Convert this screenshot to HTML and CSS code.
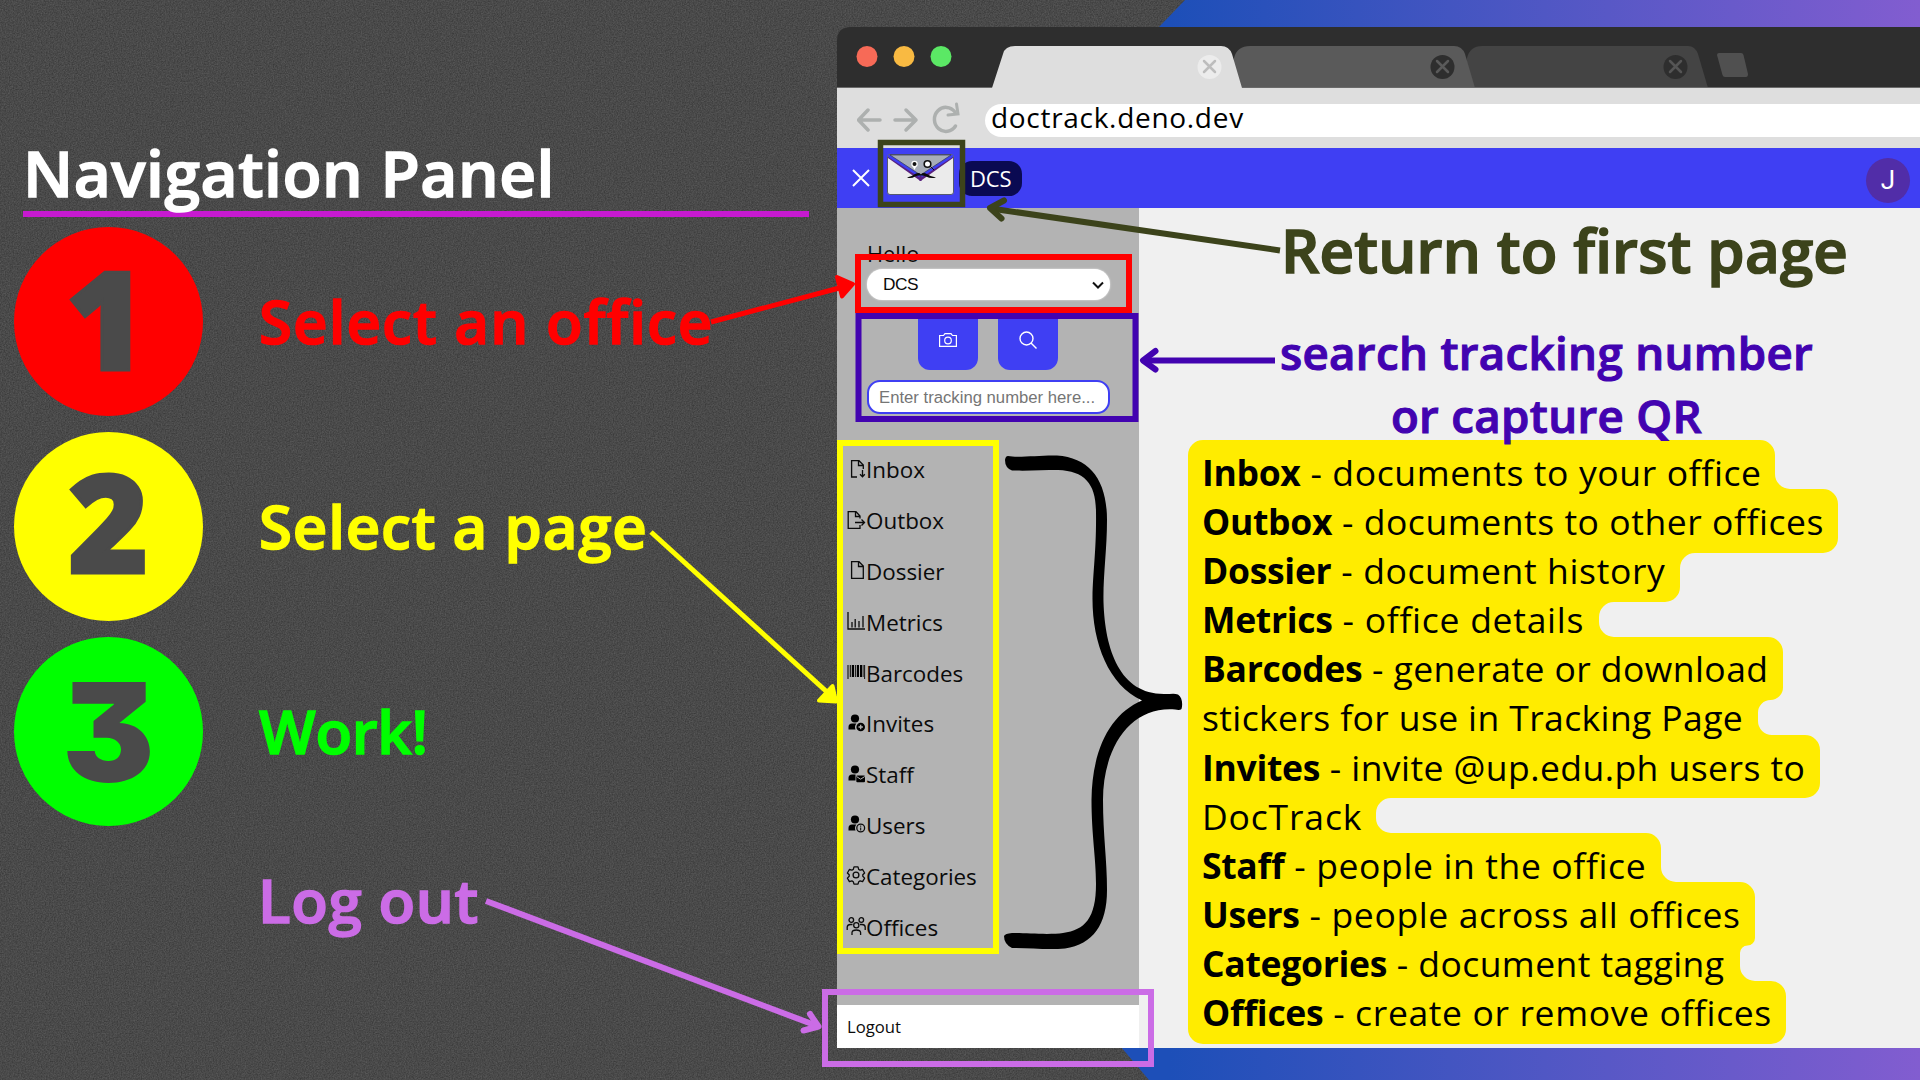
FILE: index.html
```html
<!DOCTYPE html>
<html lang="en">
<head>
<meta charset="utf-8">
<title>DocTrack – Navigation Panel</title>
<link rel="stylesheet" href="styles.css">
</head>
<body>
<div class="stage">
  <svg class="backdrop" viewBox="0 0 1920 1080" aria-hidden="true">
    <defs>
      <filter id="grain" x="0" y="0" width="100%" height="100%" color-interpolation-filters="sRGB">
        <feTurbulence type="fractalNoise" baseFrequency="0.75" numOctaves="2" seed="4"/>
        <feColorMatrix values="0.24 0 0 0 0.17  0.24 0 0 0 0.17  0.24 0 0 0 0.17  0 0 0 0 1"/>
      </filter>
      <linearGradient id="sky" gradientUnits="userSpaceOnUse" x1="1170" y1="0" x2="1920" y2="0">
        <stop offset="0" stop-color="#1d4fb8"/><stop offset=".5" stop-color="#5057c4"/><stop offset="1" stop-color="#825dd0"/>
      </linearGradient>
    </defs>
    <rect width="1920" height="1080" fill="#4a4a4a"/>
    <rect width="1920" height="1080" filter="url(#grain)" opacity=".7"/>
    <path d="M1185 0H1920V1080H1149L1121 1047L1000 540L1159 27z" fill="url(#sky)"/>
  </svg>

  <section class="guide">
    <h1>Navigation Panel</h1>
    <ol class="steps">
      <li class="step red"><span class="disc one"><i>1</i></span><span class="label">Select an office</span></li>
      <li class="step yellow"><span class="disc two"><i>2</i></span><span class="label">Select a page</span></li>
      <li class="step green"><span class="disc three"><i>3</i></span><span class="label">Work!</span></li>
    </ol>
    <p class="leave">Log out</p>
  </section>

  <section class="browser">
    <svg class="tabstrip" width="1083" height="61" viewBox="0 0 1083 61">
      <path d="M0 61V14Q0 0 14 0H1083V61z" fill="#2e2e2e"/>
      <circle cx="30" cy="29.500" r="10.500" fill="#f76a57"/><circle cx="67" cy="29.500" r="10.500" fill="#f9ba42"/><circle cx="104" cy="29.500" r="10.500" fill="#5be865"/>
      <path d="M626 61L630 31Q633 19 645 19H851Q858 19 861 27L871 61z" fill="#444"/>
      <path d="M390 61L397 31Q400 19 413 19H617Q625 19 628 27L638 61z" fill="#5a5a5a"/>
      <path d="M0 60.500H1083" stroke="#6a6a6a"/>
      <path d="M155 61L166 27Q168 19 178 19H384Q392 19 395 27L405 61z" fill="#dedede"/>
      <circle cx="372.500" cy="40" r="12" fill="#ececec"/><circle cx="605.500" cy="40" r="12" fill="#2e2e2e"/><circle cx="838.500" cy="40" r="12" fill="#2e2e2e"/>
      <g stroke-width="2.500" stroke-linecap="round"><path d="M367 34l11 11m0-11l-11 11" stroke="#bdbdbd"/><path d="M600 34l11 11m0-11l-11 11" stroke="#5a5a5a"/><path d="M833 34l11 11m0-11l-11 11" stroke="#555"/></g>
      <path d="M882 26H904Q906 26 906.500 28L911 47Q911 50 909 50H888Q886 50 885.500 48L880 28Q880 26 882 26z" fill="#505050"/>
    </svg>
    <div class="toolbar">
      <svg class="navicons" width="106" height="34" viewBox="0 0 106 34" fill="none" stroke="#adb0af" stroke-width="3.500" stroke-linecap="round" stroke-linejoin="round">
        <path d="M23 19H1.500M11 9L1.500 19L11 29"/><path d="M38 19H59M49 9L59 19L49 29"/><path d="M98.500 25A11.500 12 0 1 1 98 11"/><path d="M99.500 3l1.500 10-10 1" stroke-linejoin="miter" stroke-width="3"/>
      </svg>
      <div class="address">doctrack.deno.dev</div>
    </div>
    <header class="appbar">
      <svg width="18" height="18" viewBox="0 0 18 18" stroke="#fff" stroke-width="2"><path d="M1 1l16 16M17 1L1 17"/></svg>
      <svg class="logo" width="67" height="41" viewBox="0 0 67 41">
        <rect x=".5" y=".5" width="66" height="40" rx="2.500" fill="#ebebeb" stroke="#555a70"/>
        <path d="M1 4L33.500 27L66 4V1H1z" fill="#58207f"/><path d="M1 3L33.500 24L66 3V1H1z" fill="#3f3ff3"/>
        <path d="M3 1H64L33.500 21z" fill="#a7adb8" stroke="#323656" stroke-width=".7"/>
        <path d="M33.500 22v5" stroke="#58207f" stroke-width="2"/>
        <circle cx="27.500" cy="10" r="3.200" fill="#fff"/><circle cx="27.500" cy="10" r="2" fill="#111"/><path d="M26 13l1.500 3 1.500-3z" fill="#fff"/>
        <circle cx="40.500" cy="10" r="3.300" fill="#fff" stroke="#111" stroke-width="1.600"/><path d="M43 12l4 4" stroke="#111"/>
        <path d="M20 23.500Q24 23 28 20Q32 18 34 20.500Q36 18 40 20Q44 23 49 23.500Q44 25 39 22.500Q36 21 34 21.500Q31 21 28 22.500Q24 25 20 23.500z" fill="#0b0b0b"/>
      </svg>
      <span class="chip">DCS</span>
      <span class="avatar">J</span>
    </header>
    <div class="page">
      <aside class="sidebar">
        <p class="hello">Hello</p>
        <div class="select">DCS<svg width="12" height="8" viewBox="0 0 12 8" fill="none" stroke="#111" stroke-width="2"><path d="M1 1.500l5 5 5-5"/></svg></div>
        <div class="buttons">
          <span><svg width="18" height="14" viewBox="0 0 18 14" fill="none" stroke="#fff" stroke-width="1.200"><path d="M.6 2.500H4.500L6 .6H12L13.500 2.500H17.400V13.400H.6z"/><circle cx="9" cy="7.500" r="3.300"/></svg></span>
          <span><svg width="18" height="18" viewBox="0 0 18 18" fill="none" stroke="#fff" stroke-width="1.400"><circle cx="7.500" cy="7.500" r="6.500"/><path d="M12 12l5.500 5.500"/></svg></span>
        </div>
        <div class="track">Enter tracking number here...</div>
        <nav class="menu">
          <a><svg viewBox="0 0 18 18"><path class="l" d="M10 17H4.600V.7H12L16.300 5V9M11.500.7V5.500H16.300M15.500 10V16.500M13 14.300l2.500 2.500 2.300-2.500"/></svg>Inbox</a>
          <a><svg viewBox="0 0 18 18"><path class="l" d="M13 14V17.300H1.200V.7H9L13 5V7.500M8.500.7V5.500H13M8 11.500H17.200M14.500 8.500l3 3-3 3"/></svg>Outbox</a>
          <a><svg viewBox="0 0 18 18"><path class="l" d="M4.600 1V17.300H16.300V5L12 .7H4.600zM11.500.7V5.500H16.300"/></svg>Dossier</a>
          <a><svg viewBox="0 0 18 18"><path class="l" d="M1 0V17H18"/><path class="l" stroke-width="1.800" d="M5 15.500V10M8.200 15.500V7M12 15.500V9M16 15.500V4"/></svg>Metrics</a>
          <a><svg viewBox="0 0 18 18"><path d="M.5 2h1v14h-1zM2.800 2h1v12h-1zM4.800 2h2.300v12H4.800zM8.200 2h1v12h-1zM10 2h2v12h-2zM13 2h2v12h-2zM15.700 2h.8v12h-.8zM17.200 2h.9v14h-.9z"/></svg>Barcodes</a>
          <a><svg viewBox="0 0 18 18"><circle cx="8" cy="4.500" r="4.100"/><path d="M1.500 15.500V13Q1.500 9.500 5 9.500H9.300A6 6 0 0 0 8.500 15.500z"/><circle cx="13.700" cy="13" r="4.300"/><path d="M13.700 10.800v4.400M11.500 13h4.400" stroke="#b3b3b3" stroke-width="1.300"/></svg>Invites</a>
          <a><svg viewBox="0 0 18 18"><circle cx="8" cy="4.500" r="4.100"/><path d="M1.500 15.500V13Q1.500 9.500 5 9.500H8.500V15.500z"/><rect x="9.300" y="10.500" width="8.700" height="6.800" rx="1"/><path d="M9.500 11.500l4.100 2.700 4.200-2.700" stroke="#b3b3b3" fill="none"/></svg>Staff</a>
          <a><svg viewBox="0 0 18 18"><circle cx="8" cy="4.500" r="4.100"/><path d="M1.500 15.500V13Q1.500 9.500 5 9.500H9.300A6 6 0 0 0 8.500 15.500z"/><circle class="l" cx="13.700" cy="13" r="3.900"/><path d="M13.200 10.500h1v1.200h-1zM13.200 12.500h1v3h-1z"/></svg>Users</a>
          <a><svg viewBox="0 0 18 18"><circle class="l" cx="9" cy="9" r="2.900"/><path class="l" stroke-linejoin="round" d="M7 .9h4l.7 2.500 1.400.8 2.500-.7 2 3.500-1.800 1.800v1.500l1.800 1.800-2 3.500-2.500-.7-1.400.8-.7 2.400H7l-.7-2.400-1.400-.8-2.500.7-2-3.500 1.800-1.800V8.800L.4 7l2-3.500 2.500.7 1.400-.8z"/></svg>Categories</a>
          <a><svg viewBox="0 0 18 18"><g class="l"><circle cx="4.300" cy="3" r="2.300"/><circle cx="14.300" cy="3" r="2.300"/><circle cx="9.300" cy="8.300" r="2.600"/><path d="M.2 13V10Q.5 7.500 3.500 7.500H5.500M18.200 13V10Q18 7.500 15 7.500H13M5 18V15.500Q5.300 13 9.300 13T13.600 15.500V18"/></g></svg>Offices</a>
        </nav>
        <div class="logout">Logout</div>
      </aside>
      <main class="notes">
        <h2>Return to first page</h2>
        <h3>search tracking number<br>or capture QR</h3>
        <div class="glossary">
          <svg class="marker" width="650" height="604" viewBox="1188 440 650 604" aria-hidden="true"><path fill="#ffec00" d="M1203 440H1760a15 15 0 0 1 15 15V474a15 15 0 0 0 15 15H1823a15 15 0 0 1 15 15V538a15 15 0 0 1-15 15H1695a15 15 0 0 0-15 15V587a15 15 0 0 1-15 15H1614a15 15 0 0 0-15 15V622a15 15 0 0 0 15 15H1768a15 15 0 0 1 15 15V687.500a12.500 12.500 0 0 1-12.500 12.500a12.500 12.500 0 0 0-12.500 12.500V721a14 14 0 0 0 14 14H1805a15 15 0 0 1 15 15V783a15 15 0 0 1-15 15H1391a15 15 0 0 0-15 15V818a15 15 0 0 0 15 15H1646a15 15 0 0 1 15 15V867a15 15 0 0 0 15 15H1740a15 15 0 0 1 15 15V938a7.500 7.500 0 0 1-7.500 7.500a7.500 7.500 0 0 0-7.500 7.500V966a15 15 0 0 0 15 15H1771a15 15 0 0 1 15 15V1029a15 15 0 0 1-15 15H1203a15 15 0 0 1-15-15V455a15 15 0 0 1 15-15z"/></svg>
          <p class="w3"><b>Inbox</b> - documents to your office</p>
          <p class="w2"><b>Outbox</b> - documents to other offices</p>
          <p class="w3"><b>Dossier</b> - document history</p>
          <p class="w4"><b>Metrics</b> - office details</p>
          <p class="w1"><b>Barcodes</b> - generate or download</p>
          <p class="w0">stickers for use in Tracking Page</p>
          <p class="w1"><b>Invites</b> - invite @up.edu.ph users to</p>
          <p class="w5">DocTrack</p>
          <p class="w3"><b>Staff</b> - people in the office</p>
          <p class="w3"><b>Users</b> - people across all offices</p>
          <p class="w1"><b>Categories</b> - document tagging</p>
          <p class="w3"><b>Offices</b> - create or remove offices</p>
        </div>
      </main>
    </div>
  </section>

  <svg class="overlay" viewBox="0 0 1920 1080" fill="none" stroke-width="6" aria-hidden="true">
    <g stroke="#3c431b" stroke-linecap="round" stroke-linejoin="round"><path d="M880.500 142.500H962.500V204.500H880.500z" stroke-width="5.500" stroke-linejoin="miter"/><path d="M1280 250.500L991 208.500" stroke-linecap="butt"/><path d="M1004 200.500L990 208L1001.500 218.500"/></g>
    <g stroke="#f00"><path d="M858 257H1129V310H858z"/><path d="M711 322L845 286.500" stroke-width="5"/><path d="M837 277L853 284L842 296.500z" fill="#f00" stroke-width="4" stroke-linejoin="round"/></g>
    <g stroke="#4203b0"><path d="M858.500 316H1135.500V419H858.500z"/><path d="M1275 360.500H1144"/><path d="M1155.500 351L1143 360.500L1155.500 369.500" stroke-linecap="round" stroke-linejoin="round"/></g>
    <g stroke="#ff0"><path d="M840 443H996V951H840z"/><path d="M651 532L827 692" stroke-width="5"/><path d="M832.500 686L836 701.500L819 700.500z" fill="#ff0" stroke-width="4" stroke-linejoin="round"/></g>
    <g stroke="#cb6ce6"><path d="M825 992H1151V1064H825z"/><path d="M486 901L816 1025.500"/><path d="M810 1014L818.500 1026.500L803.500 1030.500" stroke-linecap="round" stroke-linejoin="round"/></g>
    <path fill="#000" d="M1008 456C1018 458 1040 455 1057 455.500C1090 458 1107 480 1107 520C1107 550 1103 575 1103.500 602C1105 650 1120 694 1164 694C1168 694.500 1174 693 1178 694.500C1182 697 1183 704 1181.500 709Q1180 710.500 1175 709.500C1130 706 1103 748 1103 800C1103 835 1107 860 1107 890C1107 925 1093 944 1065 948.500C1048 950 1030 948 1012 948Q1004 944 1004 936Q1005 933.500 1012 933C1025 933 1050 935 1063 933C1085 930 1096 918 1096 884C1096 858 1091.500 835 1091.500 800C1092 750 1110 714 1142 700.500C1108 685 1092 642 1092.500 597C1093 570 1096.500 550 1096 512C1096 484 1085 471 1058 470C1043 470 1030 471 1012 470.500Q1005 468 1005 460Q1005.500 456 1008 456z"/>
  </svg>
</div>
</body>
</html>
```
FILE: styles.css
```css
* { box-sizing: border-box; }
body, h1, h2, h3, p, ol { margin: 0; padding: 0; }
body { width: 1920px; height: 1080px; overflow: hidden; background: #4a4a4a; font-family: "Open Sans", "Noto Sans", sans-serif; }

.stage { position: relative; display: flex; width: 1920px; height: 1080px; }
.backdrop, .overlay { position: absolute; inset: 0; width: 1920px; height: 1080px; }

.guide { position: relative; width: 837px; padding: 137px 28px 0 14px; }
h1 { margin-left: 9px; height: 80px; border-bottom: 6px solid #c61ad0; font-size: 64px; font-weight: 600; line-height: 72px; letter-spacing: .55px; color: #fff; }
h1, h2, h3, .label, .leave { -webkit-text-stroke: 1.6px currentColor; }
.steps { display: flex; flex-direction: column; gap: 16px; margin-top: 10px; list-style: none; }
.step { display: flex; align-items: center; gap: 56px; height: 189px; font-size: 60px; font-weight: 600; }
.step.red { color: #f00; letter-spacing: 1.05px; }
.step.yellow { color: #ff0; letter-spacing: .8px; }
.step.green { color: #0f0; letter-spacing: -.3px; }
.disc { display: flex; justify-content: center; width: 189px; height: 189px; border-radius: 50%; background: currentColor; font: 900 137px/176px "Noto Sans", sans-serif; letter-spacing: 0; }
.disc i { color: #4a4a4a; font-style: normal; -webkit-text-stroke: 3px #4a4a4a; }
.disc.one { padding-right: 5px; line-height: 181px; }
.disc.three { font: 900 138px/190px Inter, sans-serif; font-feature-settings: "cv09" 1; }
.disc.three i { -webkit-text-stroke: 0; }
.label { line-height: 72px; padding-bottom: 2px; white-space: nowrap; }
.leave { margin: 38px 0 0 244px; font-size: 60px; font-weight: 600; line-height: 72px; color: #cb6ce6; letter-spacing: .6px; }

.browser { position: relative; width: 1083px; height: 1048px; padding-top: 27px; display: flex; flex-direction: column; }
.tabstrip { display: block; flex: none; }
.toolbar { display: flex; flex: none; align-items: flex-start; height: 60px; padding: 16px 0 0 20px; background: #dedede; }
.navicons { margin-top: -3px; }
.address { flex: 1; height: 33px; margin-left: 22px; padding-left: 6px; border-radius: 17px 0 0 17px; background: #fff; color: #000; font-size: 28px; line-height: 27px; letter-spacing: .7px; }
.appbar { display: flex; flex: none; align-items: center; height: 60px; padding: 0 10px 0 15px; background: #3f3ff3; }
.logo { margin: -8px 5px 0 17px; }
.chip { width: 63px; height: 35px; padding-left: 11px; border-radius: 13px; background: #0a0a52; color: #fff; font-size: 22px; line-height: 35px; letter-spacing: -.2px; }
.avatar { width: 44px; height: 45px; margin: 4px 0 0 auto; border-radius: 50%; background: #512da8; color: #fff; font: 26px/45px Roboto, sans-serif; text-align: center; }

.page { display: flex; flex: none; height: 840px; background: #f0f0f0; }
.sidebar { display: flex; flex-direction: column; width: 302px; height: 840px; padding-top: 31px; background: #b3b3b3; color: #0b0b0b; }
.hello { padding-left: 30px; font-size: 21.8px; line-height: 29px; }
.select { display: flex; justify-content: space-between; align-items: center; width: 243px; height: 31px; margin: 1px 0 0 30px; padding: 0 6px 0 16px; border-radius: 16px; background: #fff; box-shadow: 0 0 2px #eee; font: 17.3px "Liberation Sans", sans-serif; letter-spacing: -.5px; }
.buttons { display: flex; gap: 20px; margin: 15px 0 0 81px; }
.buttons span { display: flex; justify-content: center; align-items: center; width: 60px; height: 55px; border-radius: 0 0 12px 12px; background: #3f3ff3; }
.buttons svg { margin-bottom: 5px; }
.track { width: 243px; height: 34px; margin: 10px 0 0 30px; padding-left: 10px; border: 2px solid #3f3ff3; border-radius: 13px; background: #fff; color: #757575; font: 16.7px/31px "Liberation Sans", sans-serif; white-space: nowrap; }
.menu { display: flex; flex-direction: column; margin-top: 31px; }
.menu a { display: flex; align-items: center; height: 50.8px; padding-left: 11px; font-size: 22.4px; line-height: 50px; }
.menu svg { width: 18px; height: 18px; margin: 0 1px 3px -1px; overflow: visible; }
.menu .l { fill: none; stroke: #0b0b0b; stroke-width: 1.3; }
.logout { height: 43px; margin-top: auto; padding-left: 10px; background: #fff; font-size: 16.7px; line-height: 43px; }

.notes { width: 781px; padding: 7px 0 0 142px; white-space: nowrap; isolation: isolate; }
h2 { font-size: 60px; font-weight: 600; line-height: 70px; letter-spacing: .2px; color: #3c431b; }
h3 { width: 537px; margin: 36px 0 0 -3px; font-size: 45.6px; font-weight: 600; line-height: 63px; letter-spacing: .35px; text-align: center; color: #4203b0; -webkit-text-stroke-width: 1.1px; position: relative; z-index: 1; }
.glossary { position: relative; margin: 1px 0 0 -79px; color: #000; font-size: 35.5px; line-height: 49.1px; isolation: isolate; }
.glossary b { letter-spacing: -.3px; }
.w0 { letter-spacing: .38px; }
.w1 { letter-spacing: .44px; }
.w2 { letter-spacing: .55px; }
.w3 { letter-spacing: .63px; }
.w4 { letter-spacing: .73px; }
.w5 { letter-spacing: .83px; }
.marker { position: absolute; left: -14px; top: -8px; z-index: -1; }
```
